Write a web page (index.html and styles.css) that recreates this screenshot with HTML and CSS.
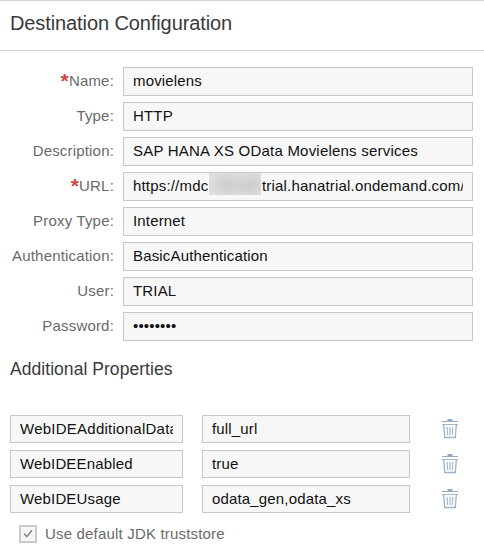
FILE: index.html
```
<!DOCTYPE html>
<html lang="en">
<head>
<meta charset="utf-8">
<title>Destination Configuration</title>
<link rel="stylesheet" href="styles.css">
</head>
<body>
<svg class="defs" width="0" height="0">
  <symbol id="trash" viewBox="0 0 18 20">
    <path fill="#91acc4" d="M6.5 0h5v2h-5zM1 2h16v1H1z"/>
    <path fill="#a3b9cc" d="M1 5h16v1H1z"/>
    <path fill="none" stroke="#9bb3c9" stroke-width="1.3" d="M2.7 6L3.7 18.5H14.3L15.3 6"/>
    <path fill="none" stroke="#a9bed0" stroke-width="1.3" d="M6.2 8l.4 8M9 8v8M11.8 8l-.4 8"/>
  </symbol>
</svg>
<main class="panel">
  <header class="panel-header"><h1>Destination Configuration</h1></header>
  <section class="form">
    <div class="row"><label class="required">Name:</label><div class="field"><span>movielens</span></div></div>
    <div class="row"><label>Type:</label><div class="field"><span>HTTP</span></div></div>
    <div class="row"><label>Description:</label><div class="field description"><span>SAP HANA XS OData Movielens services</span></div></div>
    <div class="row"><label class="required">URL:</label><div class="field url"><span>https://mdc</span><i class="redacted"></i><span class="rest">trial.hanatrial.ondemand.com/</span></div></div>
    <div class="row"><label>Proxy Type:</label><div class="field"><span>Internet</span></div></div>
    <div class="row"><label>Authentication:</label><div class="field"><span>BasicAuthentication</span></div></div>
    <div class="row"><label>User:</label><div class="field"><span>TRIAL</span></div></div>
    <div class="row"><label>Password:</label><div class="field"><span>••••••••</span></div></div>
  </section>
  <h2>Additional Properties</h2>
  <section class="properties">
    <div class="field"><span class="wide">WebIDEAdditionalData</span></div><div class="field"><span>full_url</span></div><svg class="trash"><use href="#trash"/></svg>
    <div class="field"><span>WebIDEEnabled</span></div><div class="field"><span>true</span></div><svg class="trash"><use href="#trash"/></svg>
    <div class="field"><span>WebIDEUsage</span></div><div class="field"><span>odata_gen,odata_xs</span></div><svg class="trash"><use href="#trash"/></svg>
  </section>
  <div class="truststore">
    <svg class="checkbox" viewBox="0 0 18 18"><rect x="1" y="1" width="16" height="16" fill="#f7f7f7" stroke="#cacaca" stroke-width="2"/><path d="M5 8.6l2.8 3L13 5.2" fill="none" stroke="#828282" stroke-width="1.5"/></svg>
    <span>Use default JDK truststore</span>
  </div>
</main>
</body>
</html>
```
FILE: styles.css
```
* { box-sizing: border-box; }
body {
  margin: 0;
  background: #fff;
  color: #111;
  font: 15px/27px "Liberation Sans", Arial, sans-serif;
  letter-spacing: 0.16px;
}
.defs { display: block; }
.panel { height: 552px; overflow: hidden; border-top: 1px solid #d3d3d3; }
.panel-header { height: 50px; padding-left: 10px; border-bottom: 1px solid #d3d3d3; }
h1, h2 { margin: 0; color: #3a3a3a; font-weight: normal; }
h1 { font-size: 20px; line-height: 44px; letter-spacing: -0.1px; }
h2 { margin: 17px 0 0 10px; font-size: 17.5px; line-height: 23px; letter-spacing: 0.05px; }
.form { display: grid; gap: 6px; padding: 16px 11px 0 0; }
.row { display: grid; grid-template-columns: 114px 350px; column-gap: 9px; height: 29px; }
.row label { color: #6a6a6a; text-align: right; white-space: nowrap; letter-spacing: 0.18px; }
.required::before {
  content: "*";
  color: #cc4848;
  font-size: 21px;
  font-weight: bold;
  line-height: 20px;
  vertical-align: -2px;
}
.field {
  display: flex;
  min-width: 0;
  padding: 0 9px;
  border: 1px solid #c8c8c8;
  background: #f7f7f7;
  line-height: 25px;
  white-space: nowrap;
}
.field span { flex: 1; min-width: 0; overflow: hidden; }
.field.description { letter-spacing: 0.21px; }
.field .wide { letter-spacing: 0.25px; }
.field.url { letter-spacing: 0.18px; }
.field.url span:first-child { flex: none; width: 75px; }
.redacted {
  width: 52px;
  height: 22px;
  margin: 0 1px 0 1px;
  background:
    radial-gradient(ellipse 20px 15px at 36% 55%, rgba(195, 195, 195, 0.7), transparent),
    radial-gradient(ellipse 20px 15px at 80% 55%, rgba(195, 195, 195, 0.7), transparent),
    #e0e0e0;
}
.properties {
  display: grid;
  grid-template-columns: 173px 208px 31px;
  grid-auto-rows: 28px;
  gap: 7px 19px;
  padding: 34px 0 0 10px;
}
.properties .field { line-height: 26px; }
.trash { width: 18px; height: 20px; margin: 4px 0 0 12px; }
.truststore { display: flex; align-items: center; height: 24px; margin: 9px 0 0 19px; color: #6a6a6a; }
.truststore span { line-height: 24px; letter-spacing: 0.18px; }
.checkbox { width: 18px; height: 18px; margin-right: 8px; }
```
